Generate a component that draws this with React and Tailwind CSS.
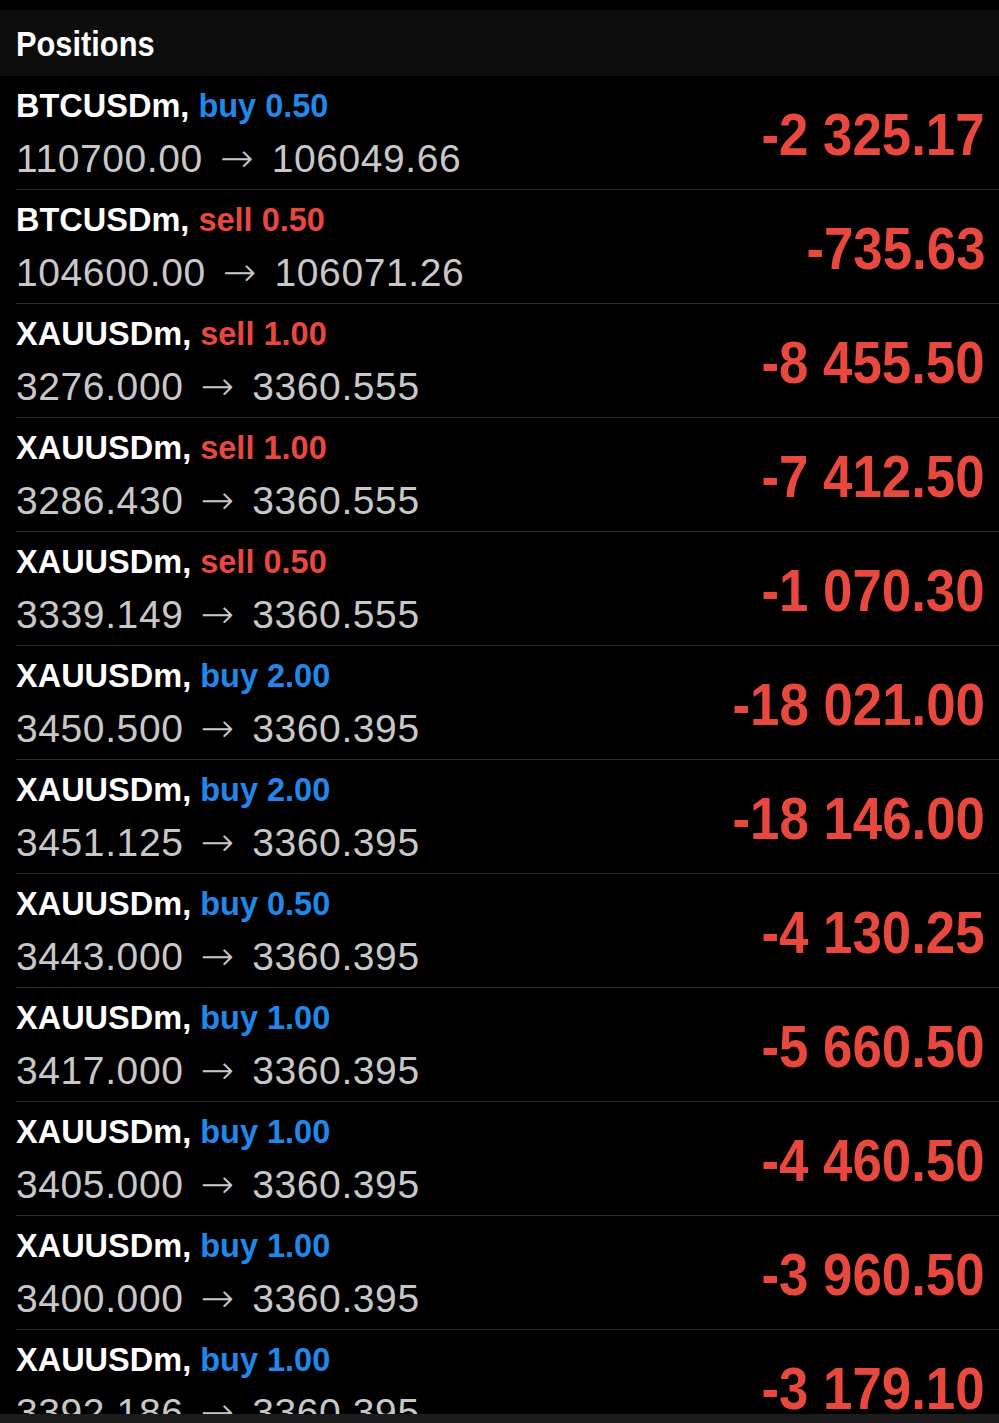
const positions = [
  { symbol: 'BTCUSDm', side: 'buy', volume: '0.50', open: '110700.00', current: '106049.66', profit: '-2 325.17' },
  { symbol: 'BTCUSDm', side: 'sell', volume: '0.50', open: '104600.00', current: '106071.26', profit: '-735.63' },
  { symbol: 'XAUUSDm', side: 'sell', volume: '1.00', open: '3276.000', current: '3360.555', profit: '-8 455.50' },
  { symbol: 'XAUUSDm', side: 'sell', volume: '1.00', open: '3286.430', current: '3360.555', profit: '-7 412.50' },
  { symbol: 'XAUUSDm', side: 'sell', volume: '0.50', open: '3339.149', current: '3360.555', profit: '-1 070.30' },
  { symbol: 'XAUUSDm', side: 'buy', volume: '2.00', open: '3450.500', current: '3360.395', profit: '-18 021.00' },
  { symbol: 'XAUUSDm', side: 'buy', volume: '2.00', open: '3451.125', current: '3360.395', profit: '-18 146.00' },
  { symbol: 'XAUUSDm', side: 'buy', volume: '0.50', open: '3443.000', current: '3360.395', profit: '-4 130.25' },
  { symbol: 'XAUUSDm', side: 'buy', volume: '1.00', open: '3417.000', current: '3360.395', profit: '-5 660.50' },
  { symbol: 'XAUUSDm', side: 'buy', volume: '1.00', open: '3405.000', current: '3360.395', profit: '-4 460.50' },
  { symbol: 'XAUUSDm', side: 'buy', volume: '1.00', open: '3400.000', current: '3360.395', profit: '-3 960.50' },
  { symbol: 'XAUUSDm', side: 'buy', volume: '1.00', open: '3392.186', current: '3360.395', profit: '-3 179.10' },
];

function PositionRow({ p }) {
  return (
    <div className="flex h-[114px] shrink-0 justify-between border-b border-[#2c2c2c] pr-[14px]">
      <div className="flex flex-col">
        <div className="mt-[11px] whitespace-nowrap text-[32.5px] font-bold leading-[38px]">
          <span className="text-white">{p.symbol}, </span>
          <span className={p.side === 'buy' ? 'text-[#2188ea]' : 'text-[#e8483d]'}>
            {p.side} {p.volume}
          </span>
        </div>
        <div className="mt-[10px] whitespace-nowrap text-[39px] leading-[46px] tracking-[0.6px] text-[#c8c8c8]">
          {p.open}
          <span className="mx-[4px] font-['DejaVu_Sans',sans-serif] text-[40px] font-extralight"> → </span>
          {p.current}
        </div>
      </div>
      <div className="mt-[29px] origin-right scale-x-[0.88] whitespace-nowrap text-[60px] font-bold leading-[60px] text-[#e8483d]">
        {p.profit}
      </div>
    </div>
  );
}

export default function App() {
  return (
    <div className="flex h-[1423px] w-[999px] flex-col overflow-hidden bg-black font-['Liberation_Sans',Arial,sans-serif]">
      <div className="mt-[10px] flex h-[66px] shrink-0 items-center bg-[#0d0d0d] pl-4">
        <span className="origin-left scale-x-[0.88] text-[35px] font-bold leading-none text-white">
          Positions
        </span>
      </div>
      <div className="flex min-h-0 flex-1 flex-col overflow-hidden pl-4">
        {positions.map((p, i) => (
          <PositionRow key={i} p={p} />
        ))}
      </div>
      <div className="h-[9px] shrink-0 bg-[#1c1c1c]" />
    </div>
  );
}
